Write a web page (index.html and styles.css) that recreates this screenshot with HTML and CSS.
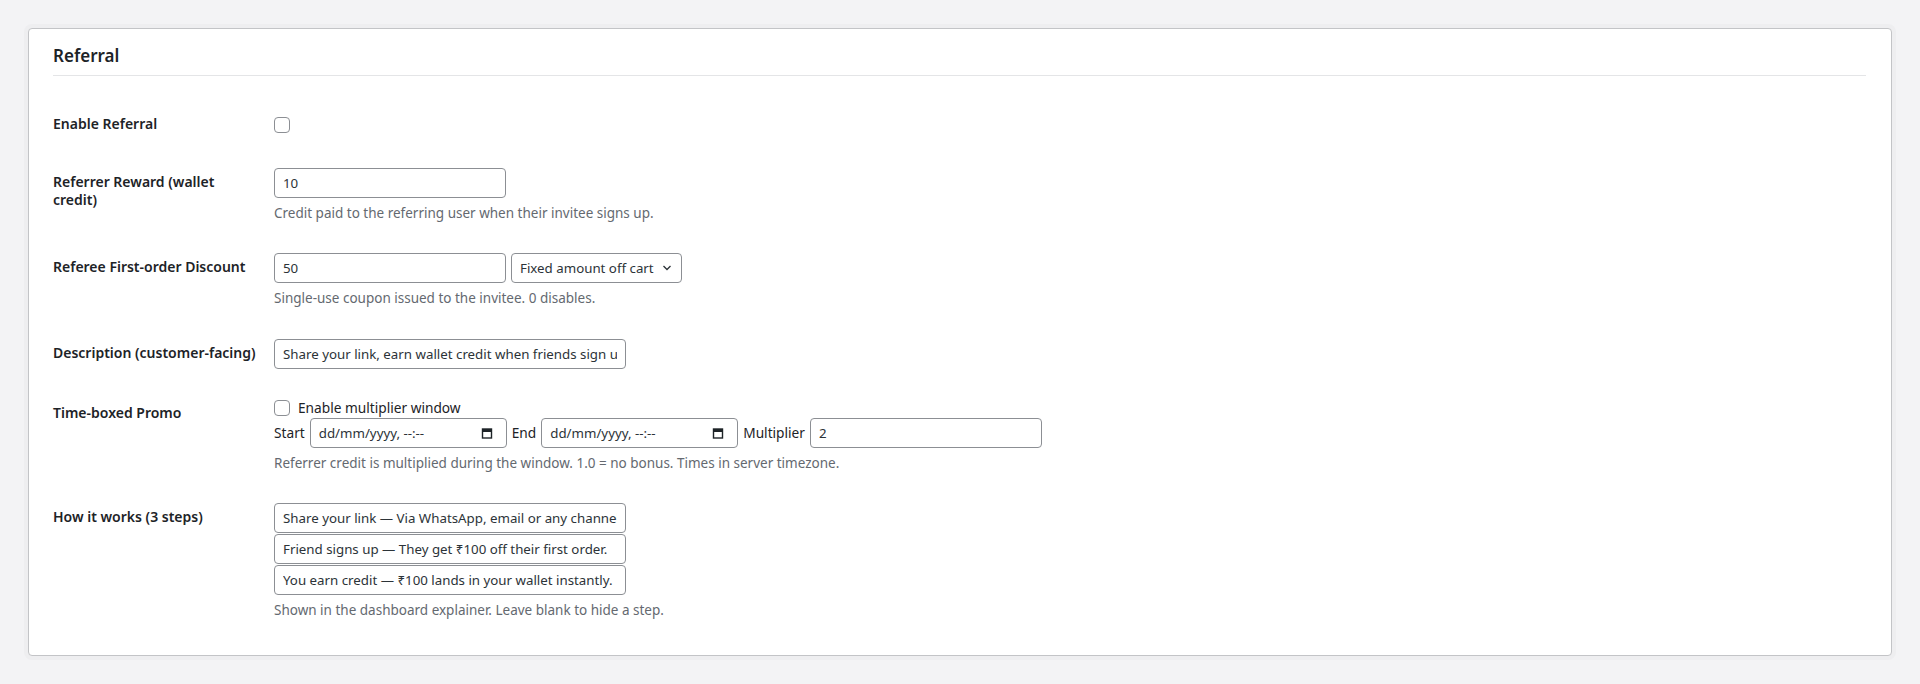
FILE: index.html
```html
<!DOCTYPE html>
<html>
<head>
    <title>Referral Settings</title>
    <link rel="stylesheet" href="styles.css">
</head>
<body>
    <div class="wrap">
        <div class="card">
            <h2 class="card-title">Referral</h2>
            <table class="form-table">
                <tr>
                    <th>Enable Referral</th>
                    <td><input type="checkbox" class="check first-check"></td>
                </tr>
                <tr>
                    <th>Referrer Reward (wallet credit)</th>
                    <td>
                        <input type="text" class="field num-field" value="10">
                        <p class="description">Credit paid to the referring user when their invitee signs up.</p>
                    </td>
                </tr>
                <tr>
                    <th>Referee First-order Discount</th>
                    <td>
                        <div class="field-row">
                            <input type="text" class="field num-field" value="50">
                            <span class="select-wrap">
                                <select class="field select-field">
                                    <option>Fixed amount off cart</option>
                                    <option>Percentage off cart</option>
                                </select>
                                <svg class="chevron" width="10" height="6" viewBox="0 0 10 6"><path d="M1.5 1l3.5 3.5 3.5-3.5" fill="none" stroke="#2c3338" stroke-width="1.3"/></svg>
                            </span>
                        </div>
                        <p class="description">Single-use coupon issued to the invitee. 0 disables.</p>
                    </td>
                </tr>
                <tr>
                    <th>Description (customer-facing)</th>
                    <td>
                        <input type="text" class="field text-field" value="Share your link, earn wallet credit when friends sign up.">
                    </td>
                </tr>
                <tr>
                    <th>Time-boxed Promo</th>
                    <td>
                        <label class="check-label"><input type="checkbox" class="check"> Enable multiplier window</label>
                        <div class="field-row">
                            <span>Start</span>
                            <span class="field date-field">
                                <input type="text" placeholder="dd/mm/yyyy, --:--">
                                <svg width="12" height="12" viewBox="0 0 12 12"><rect x="1.5" y="2" width="9" height="9" fill="none" stroke="#1d2327" stroke-width="1.4"/><rect x="1.5" y="2" width="9" height="3" fill="#1d2327"/></svg>
                            </span>
                            <span>End</span>
                            <span class="field date-field">
                                <input type="text" placeholder="dd/mm/yyyy, --:--">
                                <svg width="12" height="12" viewBox="0 0 12 12"><rect x="1.5" y="2" width="9" height="9" fill="none" stroke="#1d2327" stroke-width="1.4"/><rect x="1.5" y="2" width="9" height="3" fill="#1d2327"/></svg>
                            </span>
                            <span>Multiplier</span>
                            <input type="text" class="field num-field" value="2">
                        </div>
                        <p class="description">Referrer credit is multiplied during the window. 1.0 = no bonus. Times in server timezone.</p>
                    </td>
                </tr>
                <tr>
                    <th>How it works (3 steps)</th>
                    <td>
                        <div class="step-list">
                            <input type="text" class="field text-field" value="Share your link — Via WhatsApp, email or any channel you like.">
                            <input type="text" class="field text-field" value="Friend signs up — They get ₹100 off their first order.">
                            <input type="text" class="field text-field" value="You earn credit — ₹100 lands in your wallet instantly.">
                        </div>
                        <p class="description">Shown in the dashboard explainer. Leave blank to hide a step.</p>
                    </td>
                </tr>
            </table>
        </div>
    </div>
</body>
</html>
```
FILE: styles.css
```css
body {
    margin: 0;
    background: #f3f3f5;
    font-family: "Noto Sans", "Liberation Sans", sans-serif;
    font-size: 14px;
    color: #1d2327;
}

.wrap {
    padding: 28px;
}

.card {
    background: #fff;
    border: 1px solid #c3c4c7;
    border-radius: 4px;
    box-shadow: 0 0 0 4px #eeeef0;
    padding: 0 25px 20px 24px;
}

.card-title {
    margin: 0;
    padding: 16px 0 8px;
    font-size: 17px;
    line-height: 22px;
    font-weight: 600;
    border-bottom: 1px solid #e4e5e7;
}

.form-table {
    border-collapse: collapse;
    width: 100%;
    margin-top: 19px;
}

.form-table th {
    width: 205px;
    padding: 20px 6px 20px 0;
    text-align: left;
    vertical-align: top;
    font-weight: 600;
    line-height: 1.3;
}

.form-table td {
    padding: 15px 10px;
    vertical-align: top;
    line-height: 1.3;
}

.field {
    box-sizing: border-box;
    height: 30px;
    margin: 0;
    padding: 0 8px;
    border: 1px solid #8c8f94;
    border-radius: 4px;
    background: #fff;
    color: #2c3338;
    font-family: inherit;
    font-size: 13.3px;
    display: block;
}

.num-field {
    width: 232px;
}

.text-field {
    width: 352px;
}

.field-row {
    display: flex;
    align-items: center;
    gap: 5px;
    font-size: 13.7px;
}

.select-wrap {
    position: relative;
    display: block;
}

.select-field {
    -webkit-appearance: none;
    appearance: none;
    width: 171px;
    padding: 0 22px 0 8px;
}

.chevron {
    position: absolute;
    right: 10px;
    top: 12px;
}

.date-field {
    display: flex;
    align-items: center;
    width: 197px;
    padding: 0 13px 0 8px;
}

.date-field input {
    flex: 1;
    min-width: 0;
    border: none;
    padding: 0;
    outline: none;
    font-family: inherit;
    font-size: 13.3px;
    color: #2c3338;
}

.date-field input::placeholder {
    color: #2c3338;
}

.check {
    -webkit-appearance: none;
    appearance: none;
    width: 16px;
    height: 16px;
    margin: 0;
    border: 1px solid #8c8f94;
    border-radius: 4px;
    background: #fff;
}

.first-check {
    margin-top: 7px;
    display: block;
}

.check-label {
    display: flex;
    align-items: center;
    gap: 8px;
    height: 19px;
    font-size: 13.7px;
}

.step-list {
    display: flex;
    flex-direction: column;
    gap: 1px;
}

.description {
    margin: 5px 0 0;
    font-size: 13.5px;
    line-height: 1.5;
    color: #646970;
}
```
